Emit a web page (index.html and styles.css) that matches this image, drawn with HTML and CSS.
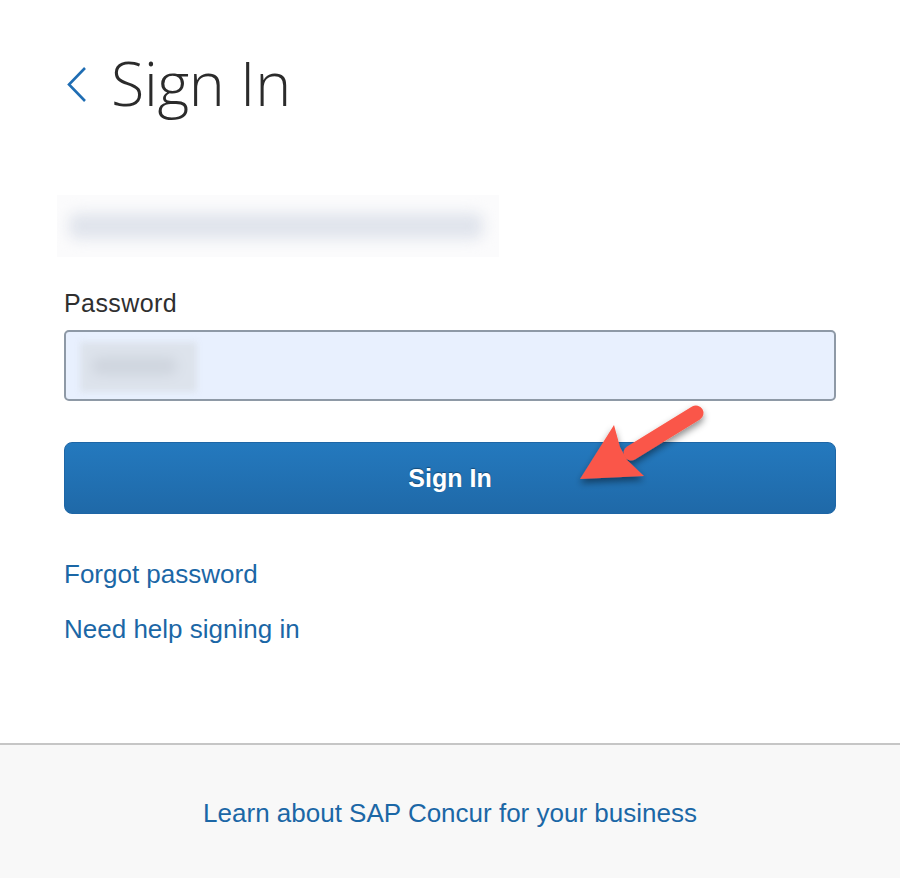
FILE: index.html
```html
<!DOCTYPE html>
<html lang="en">
<head>
<meta charset="utf-8">
<title>Sign In</title>
<link rel="stylesheet" href="styles.css">
</head>
<body>
<div class="page">
  <main class="main">
    <header class="title-row">
      <svg class="back" width="24" height="40" viewBox="0 0 24 40" aria-hidden="true">
        <polyline points="20,5 4,21.5 20,38" fill="none" stroke="#1f6db3" stroke-width="2.6" stroke-linejoin="miter"/>
      </svg>
      <h1 class="title">Sign In</h1>
    </header>

    <div class="email-row"><div class="email-blur"></div></div>

    <form class="form">
      <label class="label">Password</label>
      <div class="input"><div class="pw-blur"></div></div>
      <div class="btn-wrap">
        <button type="button" class="btn">Sign In</button>
        <svg class="arrow" width="160" height="110" viewBox="0 0 160 110" aria-hidden="true">
          <defs>
            <filter id="sh" x="-30%" y="-30%" width="160%" height="160%">
              <feDropShadow dx="0" dy="4" stdDeviation="3.5" flood-color="#000" flood-opacity="0.45"/>
            </filter>
          </defs>
          <g filter="url(#sh)" fill="#fa5748">
            <line x1="70" y1="63" x2="135" y2="23" stroke="#fa5748" stroke-width="15" stroke-linecap="round"/>
            <polygon points="19,89 53,35 59,57 66,70 83,86"/>
          </g>
        </svg>
      </div>
    </form>

    <nav class="links">
      <a class="link" href="#">Forgot password</a>
      <a class="link" href="#">Need help signing in</a>
    </nav>
  </main>

  <footer class="footer">
    <a class="footer-link" href="#">Learn about SAP Concur for your business</a>
  </footer>
</div>
</body>
</html>
```

FILE: styles.css
```css
html, body {
  margin: 0;
  padding: 0;
  background: #ffffff;
}

.page {
  width: 900px;
  height: 878px;
  display: flex;
  flex-direction: column;
  overflow: hidden;
}

.main {
  padding: 0 64px 0 64px;
  height: 743px;
  box-sizing: border-box;
}

.title-row {
  display: flex;
  align-items: center;
  gap: 22px;
  padding-top: 43px;
  height: 80px;
}

.back {
  margin-left: 1px;
  flex: none;
}

.title {
  margin: 0;
  font-family: "Open Sans", sans-serif;
  font-weight: 300;
  font-size: 61px;
  line-height: 80px;
  color: #2b2b2b;
  letter-spacing: -0.3px;
}

.email-row {
  margin-top: 72px;
  margin-left: -7px;
  width: 442px;
  height: 62px;
  background: #fbfbfc;
  position: relative;
  overflow: hidden;
}

.email-blur {
  position: absolute;
  left: 12px;
  top: 18px;
  width: 414px;
  height: 26px;
  background: #e0e4ec;
  filter: blur(7px);
  border-radius: 8px;
}

.form {
  margin: 0;
  padding-top: 30px;
  display: flex;
  flex-direction: column;
}

.label {
  font-family: "Liberation Sans", Arial, sans-serif;
  font-size: 25px;
  letter-spacing: 0.4px;
  color: #2f2f2f;
  line-height: 32px;
}

.input {
  margin-top: 11px;
  height: 71px;
  box-sizing: border-box;
  border: 2px solid #8e99a6;
  border-radius: 5px;
  background: #e8f0fe;
  position: relative;
  overflow: hidden;
}

.pw-blur {
  position: absolute;
  left: 14px;
  top: 10px;
  width: 117px;
  height: 50px;
  background: #dde3ec;
  filter: blur(3px);
}

.pw-blur::after {
  content: "";
  position: absolute;
  left: 12px;
  top: 15px;
  width: 85px;
  height: 18px;
  background: #cfd5de;
  filter: blur(5px);
  border-radius: 9px;
}

.btn-wrap {
  margin-top: 41px;
  position: relative;
}

.btn {
  display: block;
  width: 100%;
  height: 72px;
  border: 1px solid #1e66a6;
  border-radius: 8px;
  background: linear-gradient(#2479be, #1f69a8);
  color: #ffffff;
  font-family: "Liberation Sans", Arial, sans-serif;
  font-weight: bold;
  font-size: 25px;
  text-shadow: 0 -1px 1px rgba(0, 0, 0, 0.35);
  padding: 0;
  cursor: pointer;
}

.arrow {
  position: absolute;
  left: 497px;
  top: -52px;
  overflow: visible;
}

.links {
  margin-top: 44px;
  display: flex;
  flex-direction: column;
  gap: 23px;
}

.link {
  font-family: "Liberation Sans", Arial, sans-serif;
  font-size: 26px;
  line-height: 32px;
  color: #1b67a6;
  text-decoration: none;
  align-self: flex-start;
}

.footer {
  flex: 1;
  border-top: 2px solid #c6c6c6;
  background: #f8f8f8;
  display: flex;
  justify-content: center;
  padding-top: 50px;
}

.footer-link {
  font-family: "Liberation Sans", Arial, sans-serif;
  font-size: 26px;
  line-height: 36px;
  color: #1b67a6;
  text-decoration: none;
  height: 36px;
}
```
